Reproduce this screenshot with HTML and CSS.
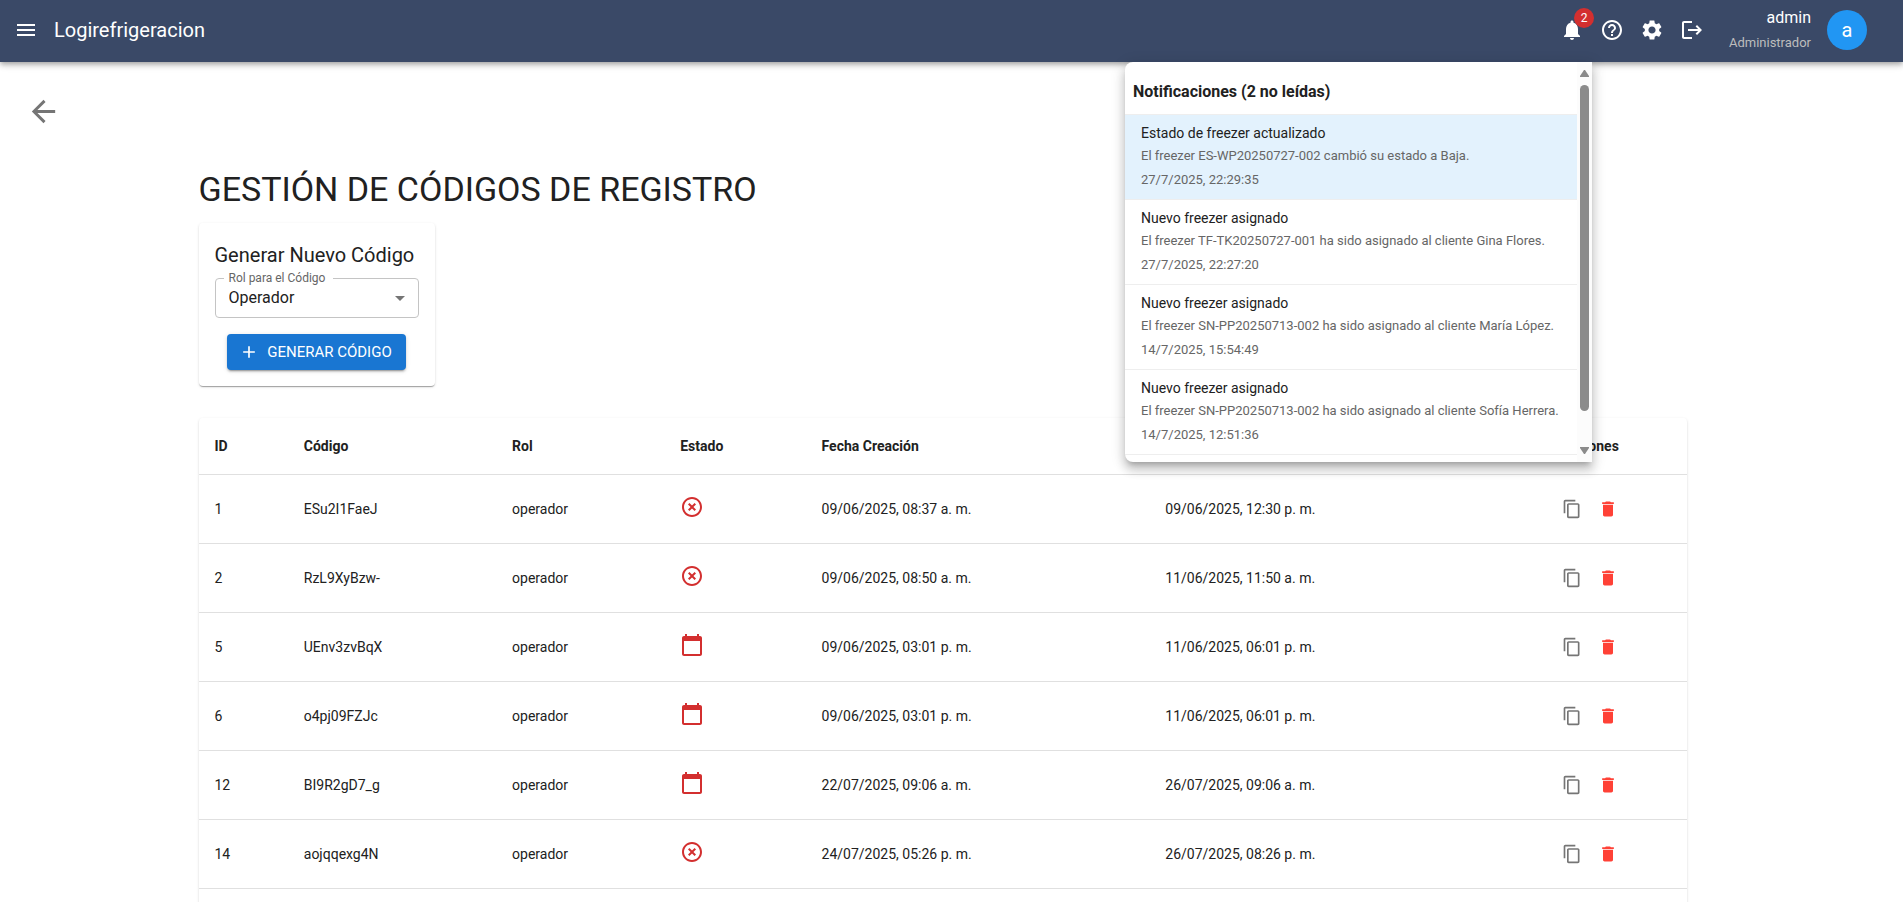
FILE: index.html
```html
<!DOCTYPE html>
<html lang="es">
<head>
<meta charset="utf-8">
<meta name="viewport" content="width=device-width, initial-scale=1">
<title>Logirefrigeracion</title>
<link rel="stylesheet" href="styles.css">
</head>
<body>
<svg class="sprite" aria-hidden="true">
  <symbol id="i-copy" viewBox="0 0 24 24"><path d="M16 1H4c-1.1 0-2 .9-2 2v14h2V3h12V1zm3 4H8c-1.1 0-2 .9-2 2v14c0 1.1.9 2 2 2h11c1.1 0 2-.9 2-2V7c0-1.1-.9-2-2-2zm0 16H8V7h11v14z"/></symbol>
  <symbol id="i-delete" viewBox="0 0 24 24"><path d="M6 19c0 1.1.9 2 2 2h8c1.1 0 2-.9 2-2V7H6v12zM19 4h-3.5l-1-1h-5l-1 1H5v2h14V4z"/></symbol>
  <symbol id="i-used" viewBox="0 0 24 24"><path d="M14.59 8 12 10.59 9.41 8 8 9.41 10.59 12 8 14.59 9.41 16 12 13.41 14.59 16 16 14.59 13.41 12 16 9.41 14.59 8zM12 2C6.47 2 2 6.47 2 12s4.47 10 10 10 10-4.47 10-10S17.53 2 12 2zm0 18c-4.41 0-8-3.59-8-8s3.59-8 8-8 8 3.59 8 8-3.59 8-8 8z"/></symbol>
  <symbol id="i-expired" viewBox="0 0 24 24"><path d="M20 3h-1V1h-2v2H7V1H5v2H4c-1.1 0-2 .9-2 2v16c0 1.1.9 2 2 2h16c1.1 0 2-.9 2-2V5c0-1.1-.9-2-2-2zm0 18H4V8h16v13z"/></symbol>
</svg>

<div class="shell">
  <header class="appbar">
    <button class="icon-btn" aria-label="Menú"><svg class="icon" viewBox="0 0 24 24"><path d="M3 18h18v-2H3v2zm0-5h18v-2H3v2zm0-7v2h18V6H3z"/></svg></button>
    <span class="brand">Logirefrigeracion</span>
    <div class="tools">
      <button class="icon-btn bell" aria-label="Notificaciones">
        <svg class="icon" viewBox="0 0 24 24"><path d="M12 22c1.1 0 2-.9 2-2h-4c0 1.1.89 2 2 2zm6-6v-5c0-3.07-1.64-5.64-4.5-6.32V4c0-.83-.67-1.5-1.5-1.5s-1.5.67-1.5 1.5v.68C7.63 5.36 6 7.92 6 11v5l-2 2v1h16v-1l-2-2z"/></svg>
        <span class="badge">2</span>
      </button>
      <button class="icon-btn" aria-label="Ayuda"><svg class="icon" viewBox="0 0 24 24"><path d="M11 18h2v-2h-2v2zm1-16C6.48 2 2 6.48 2 12s4.48 10 10 10 10-4.48 10-10S17.52 2 12 2zm0 18c-4.41 0-8-3.59-8-8s3.59-8 8-8 8 3.59 8 8-3.59 8-8 8zm0-14c-2.21 0-4 1.79-4 4h2c0-1.1.9-2 2-2s2 .9 2 2c0 2-3 1.75-3 5h2c0-2.25 3-2.5 3-5 0-2.21-1.79-4-4-4z"/></svg></button>
      <button class="icon-btn" aria-label="Configuración"><svg class="icon" viewBox="0 0 24 24"><path d="M19.14 12.94c.04-.3.06-.61.06-.94 0-.32-.02-.64-.07-.94l2.03-1.58c.18-.14.23-.41.12-.61l-1.92-3.32c-.12-.22-.37-.29-.59-.22l-2.39.96c-.5-.38-1.03-.7-1.62-.94l-.36-2.54c-.04-.24-.24-.41-.48-.41h-3.84c-.24 0-.43.17-.47.41l-.36 2.54c-.59.24-1.13.57-1.62.94l-2.39-.96c-.22-.08-.47 0-.59.22L2.74 8.87c-.12.21-.08.47.12.61l2.03 1.58c-.05.3-.09.63-.09.94s.02.64.07.94l-2.03 1.58c-.18.14-.23.41-.12.61l1.92 3.32c.12.22.37.29.59.22l2.39-.96c.5.38 1.03.7 1.62.94l.36 2.54c.05.24.24.41.48.41h3.84c.24 0 .44-.17.47-.41l.36-2.54c.59-.24 1.13-.56 1.62-.94l2.39.96c.22.08.47 0 .59-.22l1.92-3.32c.12-.22.07-.47-.12-.61l-2.01-1.58zM12 15.6c-1.98 0-3.6-1.62-3.6-3.6s1.62-3.6 3.6-3.6 3.6 1.62 3.6 3.6-1.62 3.6-3.6 3.6z"/></svg></button>
      <button class="icon-btn" aria-label="Cerrar sesión"><svg class="icon" viewBox="0 0 24 24"><path d="m17 7-1.41 1.41L18.17 11H8v2h10.17l-2.58 2.58L17 17l5-5zM4 5h8V3H4c-1.1 0-2 .9-2 2v14c0 1.1.9 2 2 2h8v-2H4V5z"/></svg></button>
    </div>
    <div class="user">
      <span class="user-name">admin</span>
      <span class="user-role">Administrador</span>
    </div>
    <div class="avatar">a</div>

    <section class="popover" aria-label="Notificaciones">
      <div class="notes">
        <h2 class="notes-title">Notificaciones (2 no leídas)</h2>
        <ul class="notes-list">
          <li class="note note-unread">
            <p class="note-title">Estado de freezer actualizado</p>
            <p class="note-text">El freezer ES-WP20250727-002 cambió su estado a Baja.</p>
            <p class="note-text">27/7/2025, 22:29:35</p>
          </li>
          <li class="note">
            <p class="note-title">Nuevo freezer asignado</p>
            <p class="note-text">El freezer TF-TK20250727-001 ha sido asignado al cliente Gina Flores.</p>
            <p class="note-text">27/7/2025, 22:27:20</p>
          </li>
          <li class="note">
            <p class="note-title">Nuevo freezer asignado</p>
            <p class="note-text">El freezer SN-PP20250713-002 ha sido asignado al cliente María López.</p>
            <p class="note-text">14/7/2025, 15:54:49</p>
          </li>
          <li class="note">
            <p class="note-title">Nuevo freezer asignado</p>
            <p class="note-text">El freezer SN-PP20250713-002 ha sido asignado al cliente Sofía Herrera.</p>
            <p class="note-text">14/7/2025, 12:51:36</p>
          </li>
        </ul>
      </div>
      <div class="scroll" aria-hidden="true">
        <svg class="scroll-arrow" viewBox="0 0 9 7"><path d="M4 0h1l4 6v1H0V6z"/></svg>
        <div class="scroll-track"><div class="scroll-thumb"></div></div>
        <svg class="scroll-arrow" viewBox="0 0 9 7"><path d="M4 7h1l4-6V0H0v1z"/></svg>
      </div>
    </section>
  </header>

  <main class="main">
    <button class="back" aria-label="Volver"><svg class="icon icon-lg" viewBox="0 0 24 24"><path d="M20 11H7.83l5.59-5.59L12 4l-8 8 8 8 1.41-1.41L7.83 13H20v-2z"/></svg></button>
    <div class="container">
      <h1 class="title">GESTIÓN DE CÓDIGOS DE REGISTRO</h1>

      <form class="card">
        <h2 class="card-title">Generar Nuevo Código</h2>
        <div class="field">
          <label class="field-label" for="rol">Rol para el Código</label>
          <select class="field-select" id="rol"><option>Operador</option></select>
          <svg class="icon field-arrow" viewBox="0 0 24 24"><path d="m7 10 5 5 5-5z"/></svg>
        </div>
        <button class="primary" type="button">
          <svg class="icon icon-sm" viewBox="0 0 24 24"><path d="M19 13h-6v6h-2v-6H5v-2h6V5h2v6h6v2z"/></svg>
          GENERAR CÓDIGO
        </button>
      </form>

      <div class="table-card">
        <table class="table">
          <colgroup><col class="c-id"><col class="c-code"><col class="c-role"><col class="c-state"><col class="c-date"><col class="c-date"><col class="c-actions"></colgroup>
          <thead>
            <tr><th>ID</th><th>Código</th><th>Rol</th><th>Estado</th><th>Fecha Creación</th><th></th><th class="center">Acciones</th></tr>
          </thead>
          <tbody>
            <tr><td>1</td><td>ESu2I1FaeJ</td><td>operador</td><td><svg class="state"><use href="#i-used"/></svg></td><td>09/06/2025, 08:37 a. m.</td><td>09/06/2025, 12:30 p. m.</td>
              <td><div class="actions"><button class="act" aria-label="Copiar"><svg class="icon icon-sm"><use href="#i-copy"/></svg></button><button class="act act-del" aria-label="Eliminar"><svg class="icon icon-sm"><use href="#i-delete"/></svg></button></div></td></tr>
            <tr><td>2</td><td>RzL9XyBzw-</td><td>operador</td><td><svg class="state"><use href="#i-used"/></svg></td><td>09/06/2025, 08:50 a. m.</td><td>11/06/2025, 11:50 a. m.</td>
              <td><div class="actions"><button class="act" aria-label="Copiar"><svg class="icon icon-sm"><use href="#i-copy"/></svg></button><button class="act act-del" aria-label="Eliminar"><svg class="icon icon-sm"><use href="#i-delete"/></svg></button></div></td></tr>
            <tr><td>5</td><td>UEnv3zvBqX</td><td>operador</td><td><svg class="state"><use href="#i-expired"/></svg></td><td>09/06/2025, 03:01 p. m.</td><td>11/06/2025, 06:01 p. m.</td>
              <td><div class="actions"><button class="act" aria-label="Copiar"><svg class="icon icon-sm"><use href="#i-copy"/></svg></button><button class="act act-del" aria-label="Eliminar"><svg class="icon icon-sm"><use href="#i-delete"/></svg></button></div></td></tr>
            <tr><td>6</td><td>o4pj09FZJc</td><td>operador</td><td><svg class="state"><use href="#i-expired"/></svg></td><td>09/06/2025, 03:01 p. m.</td><td>11/06/2025, 06:01 p. m.</td>
              <td><div class="actions"><button class="act" aria-label="Copiar"><svg class="icon icon-sm"><use href="#i-copy"/></svg></button><button class="act act-del" aria-label="Eliminar"><svg class="icon icon-sm"><use href="#i-delete"/></svg></button></div></td></tr>
            <tr><td>12</td><td>BI9R2gD7_g</td><td>operador</td><td><svg class="state"><use href="#i-expired"/></svg></td><td>22/07/2025, 09:06 a. m.</td><td>26/07/2025, 09:06 a. m.</td>
              <td><div class="actions"><button class="act" aria-label="Copiar"><svg class="icon icon-sm"><use href="#i-copy"/></svg></button><button class="act act-del" aria-label="Eliminar"><svg class="icon icon-sm"><use href="#i-delete"/></svg></button></div></td></tr>
            <tr><td>14</td><td>aojqqexg4N</td><td>operador</td><td><svg class="state"><use href="#i-used"/></svg></td><td>24/07/2025, 05:26 p. m.</td><td>26/07/2025, 08:26 p. m.</td>
              <td><div class="actions"><button class="act" aria-label="Copiar"><svg class="icon icon-sm"><use href="#i-copy"/></svg></button><button class="act act-del" aria-label="Eliminar"><svg class="icon icon-sm"><use href="#i-delete"/></svg></button></div></td></tr>
          </tbody>
        </table>
      </div>
    </div>
  </main>
</div>
</body>
</html>
```

FILE: styles.css
```css
* { box-sizing: border-box; }

body {
  margin: 0;
  background: #fff;
  color: #212121;
  font-family: Roboto, "Liberation Sans", sans-serif;
  font-size: 16px;
  line-height: 24px;
}

h1, h2, p, ul { margin: 0; padding: 0; }

button {
  border: 0;
  padding: 0;
  background: none;
  color: inherit;
  font: inherit;
  cursor: pointer;
}

.sprite { display: none; }

.shell {
  height: 100vh;
  overflow: hidden;
}

.icon {
  display: block;
  width: 24px;
  height: 24px;
  fill: currentColor;
}
.icon-sm { width: 20px; height: 20px; }
.icon-lg { width: 35px; height: 35px; }

/* App bar */
.appbar {
  position: relative;
  z-index: 2;
  display: flex;
  align-items: center;
  height: 62px;
  padding: 0 36px 2px 6px;
  background: #3a4967;
  color: #fff;
  box-shadow: 0 2px 4px -1px rgba(0, 0, 0, .2), 0 4px 5px rgba(0, 0, 0, .14), 0 1px 10px rgba(0, 0, 0, .12);
}

.icon-btn {
  position: relative;
  display: grid;
  place-items: center;
  width: 40px;
  height: 40px;
}

.brand {
  margin-left: 8px;
  font-size: 20px;
  line-height: 32px;
}

.tools {
  display: flex;
  margin-left: auto;
}

.badge {
  position: absolute;
  top: -2px;
  right: -2px;
  width: 20px;
  height: 20px;
  border-radius: 10px;
  background: #d32f2f;
  font-size: 12px;
  line-height: 20px;
  text-align: center;
}

.user {
  display: flex;
  flex-direction: column;
  width: 99px;
  padding-top: 2px;
  text-align: right;
}
.user-name { line-height: 24px; }
.user-role {
  color: #bdbdbd;
  font-size: 13px;
  line-height: 26px;
}

.avatar {
  display: grid;
  place-items: center;
  width: 40px;
  height: 40px;
  margin-left: 16px;
  border-radius: 50%;
  background: #2196f3;
  font-size: 20px;
}

/* Notifications */
.popover {
  position: absolute;
  top: 62px;
  right: 311px;
  display: flex;
  width: 467px;
  height: 400px;
  overflow: hidden;
  border-radius: 8px 0 0 8px;
  background: #fff;
  color: #212121;
  box-shadow: 0 5px 5px -3px rgba(0, 0, 0, .2), 0 8px 10px 1px rgba(0, 0, 0, .14), 0 3px 14px 2px rgba(0, 0, 0, .12);
}

.notes { flex: 1; }

.notes-title {
  padding: 18px 8px 10px;
  border-bottom: 1px solid #eee;
  font-size: 16px;
  line-height: 24px;
  font-weight: 700;
}

.notes-list { list-style: none; }

.note {
  padding: 8px 16px 7px;
  border-bottom: 1px solid #eee;
}
.note-unread { background: #e3f2fd; }
.note-title {
  font-size: 14px;
  line-height: 21px;
}
.note-text {
  color: #666;
  font-size: 13px;
  line-height: 24px;
}

.scroll {
  display: flex;
  flex-direction: column;
  align-items: center;
  width: 15px;
  padding: 8px 0;
  background: #fcfcfc;
}
.scroll-arrow {
  width: 9px;
  height: 7px;
  fill: #8b8b8b;
}
.scroll-track {
  flex: 1;
  padding: 8px 0;
}
.scroll-thumb {
  width: 9px;
  height: 92%;
  border-radius: 5px;
  background: #8b8b8b;
}

/* Page */
.main { padding: 28px 18px 0 0; }

.back {
  display: block;
  margin-left: 26px;
  padding: 4px 0;
  color: #757575;
}

.container {
  max-width: 1536px;
  margin: 0 auto;
  padding: 35px 24px 0;
}

.title {
  font-size: 34px;
  line-height: 42px;
  font-weight: 400;
}

.card {
  display: flex;
  flex-direction: column;
  align-items: center;
  width: 236px;
  margin: 13px 0 32px;
  padding: 16px;
  border-radius: 4px;
  box-shadow: 0 2px 1px -1px rgba(0, 0, 0, .2), 0 1px 1px rgba(0, 0, 0, .14), 0 1px 3px rgba(0, 0, 0, .12);
}

.card-title {
  align-self: flex-start;
  margin-bottom: 7px;
  font-size: 20px;
  line-height: 32px;
  font-weight: 400;
  white-space: nowrap;
}

.field {
  position: relative;
  width: 100%;
}
.field-label {
  position: absolute;
  top: -8px;
  left: 9px;
  padding: 0 8px 0 5px;
  background: #fff;
  color: #666;
  font-size: 12px;
  line-height: 16px;
}
.field-select {
  display: block;
  width: 100%;
  height: 40px;
  padding: 0 32px 0 13px;
  border: 1px solid #c4c4c4;
  border-radius: 4px;
  appearance: none;
  background: transparent;
  color: inherit;
  font: inherit;
}
.field-arrow {
  position: absolute;
  top: 8px;
  right: 7px;
  color: #757575;
  pointer-events: none;
}

.primary {
  display: flex;
  align-items: center;
  gap: 8px;
  margin-top: 16px;
  padding: 6px 14px 6px 12px;
  border-radius: 4px;
  background: #1976d2;
  color: #fff;
  font-size: 15px;
  white-space: nowrap;
  box-shadow: 0 3px 1px -2px rgba(0, 0, 0, .2), 0 2px 2px rgba(0, 0, 0, .14), 0 1px 5px rgba(0, 0, 0, .12);
}

/* Codes table */
.table-card {
  padding-bottom: 32px;
  border-radius: 4px;
  box-shadow: 0 2px 1px -1px rgba(0, 0, 0, .2), 0 1px 1px rgba(0, 0, 0, .14), 0 1px 3px rgba(0, 0, 0, .12);
}

.table {
  width: 100%;
  table-layout: fixed;
  border-collapse: separate;
  border-spacing: 0;
  font-size: 14px;
}
.c-id { width: 6%; }
.c-code { width: 14%; }
.c-role { width: 11.3%; }
.c-state { width: 9.5%; }
.c-date { width: 23.1%; }

.table th,
.table td {
  padding: 16px;
  border-bottom: 1px solid #e0e0e0;
  text-align: left;
}
.table th { font-weight: 700; }
.table .center { text-align: center; }

.state {
  width: 24px;
  height: 24px;
  vertical-align: -3px;
  fill: #d32f2f;
}

.actions {
  display: flex;
  justify-content: center;
}
.act {
  display: grid;
  place-items: center;
  width: 36px;
  height: 36px;
  color: #757575;
}
.act-del { color: #ff4136; }
```
